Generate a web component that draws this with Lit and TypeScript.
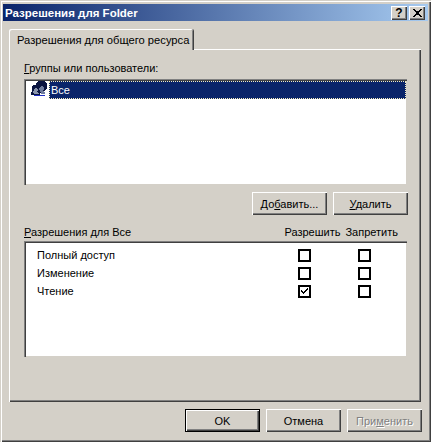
import { LitElement, html, css, svg } from "lit";
import { customElement } from "lit/decorators.js";

const checkMark = svg`<svg class="mark" width="9" height="9" viewBox="0 0 9 9" shape-rendering="crispEdges"><path d="M1 3h1v1h1v1h1V4h1V3h1V2h1V1h1v2H7v1H6v1H5v1H4v1H3V6H2V5H1z" fill="#000"/></svg>`;

const usersIcon = svg`<svg class="users" width="17" height="16" viewBox="0 0 17 16" shape-rendering="crispEdges">
  <path d="M8 0h5l3 2v5l-2 3h-2v2H4V6l1-3 1-2z" fill="#0a1440"/>
  <path d="M2 4h4l2 2v5l1 2v1H0v-3l1-1V6z" fill="#0a1440"/>
  <path d="M10 5h2v1h1v3h-1v1h1v1h1v2h-4v-2h-1V9H8V7h1V6h1z" fill="#6f7c9c"/>
  <path d="M4 7h2v1h1v2H6v1h1v1h1v1H3v-1H2v-2h1V8h1z" fill="#8a94ac"/>
  <path d="M2 14h12v1H3z" fill="#1f2fc4"/>
</svg>`;

@customElement("app-root")
export class AppRoot extends LitElement {
  static styles = css`
    :host { display: block; }
    * { box-sizing: border-box; }
    u { text-decoration: underline; text-underline-offset: 1px; }
    .window {
      width: 431px; height: 442px; background: #d4d0c8;
      padding: 4px 3px 3px 3px;
      display: flex; flex-direction: column;
      font: 11px "Liberation Sans", Arial, sans-serif; color: #000;
      box-shadow: inset 1px 1px 0 #d4d0c8, inset 2px 2px 0 #fff, inset -1px -1px 0 #404040, inset -2px -2px 0 #808080;
    }
    .title {
      height: 17px; flex: none; display: flex; align-items: center;
      padding: 0 3px 0 2px;
      background: linear-gradient(90deg, #0a246a, #a6caf0);
      color: #fff; font-weight: bold; font-size: 11.5px;
    }
    .title-text { flex: 1; }
    .cap {
      width: 16px; height: 14px; margin-left: 2px; background: #d4d0c8;
      box-shadow: inset 1px 1px 0 #fff, inset -1px -1px 0 #404040, inset -2px -2px 0 #808080;
      display: flex; align-items: center; justify-content: center;
      color: #000; font-size: 12px; font-weight: bold; line-height: 14px;
    }
    .cap svg { display: block; }
    .content { flex: 1; display: flex; flex-direction: column; padding: 8px 7px 0 6px; }
    .tabs { display: flex; height: 21px; margin-bottom: -1px; position: relative; z-index: 1; flex: none; }
    .tab {
      width: 184px; padding-left: 8px; display: flex; align-items: center; background: #d4d0c8;
      font-size: 11.2px;
      border-radius: 2px 2px 0 0;
      box-shadow: inset 1px 1px 0 #fff, inset -1px 0 0 #808080, 1px 0 0 #404040;
    }
    .panel {
      height: 353px; flex: none; padding: 13px 14px 0 15px;
      box-shadow: inset 1px 1px 0 #fff, inset -1px -1px 0 #404040, inset -2px -2px 0 #808080;
    }
    .label { height: 12px; line-height: 12px; white-space: nowrap; }
    .list {
      background: #fff;
      width: 383px;
      box-shadow: inset 1px 1px 0 #808080, inset 2px 2px 0 #404040, inset -1px -1px 0 #d4d0c8;
      padding: 2px 1px 1px 2px;
    }
    .groups { height: 106px; margin-top: 5px; }
    .group-row { display: flex; height: 18px; align-items: flex-start; padding-left: 5px; }
    .users { display: block; flex: none; margin-right: 1px; }
    .sel {
      flex: 1; height: 18px; padding-left: 1px; background: #0a246a; color: #fff;
      line-height: 16px; border: 1px dotted #f6edc0;
    }
    .actions { display: flex; justify-content: flex-end; gap: 6px; margin-top: 7px; margin-right: -1px; }
    .btn {
      width: 75px; height: 23px; display: flex; align-items: center; justify-content: center;
      background: #d4d0c8;
      box-shadow: inset 1px 1px 0 #fff, inset -1px -1px 0 #404040, inset -2px -2px 0 #808080;
    }
    .btn.default { border: 1px solid #000; }
    .btn.disabled { color: #808080; text-shadow: 1px 1px 0 #fff; }
    .perm-head { display: flex; align-items: center; height: 12px; margin-top: 11px; }
    .perm-head .name { flex: 1; }
    .perm-head .col { margin-right: 5px; white-space: nowrap; }
    .perm-head .col:last-child { margin-right: 9px; }
    .perms { height: 116px; margin-top: 3px; padding: 5px 36px 0 13px; }
    .row { display: grid; grid-template-columns: 1fr 13px 13px; column-gap: 47px; height: 18px; align-items: center; }
    .check {
      width: 13px; height: 13px; border: 2px solid #000; background: #fff;
      display: flex; align-items: center; justify-content: center;
    }
    .mark { display: block; flex: none; }
    .footer { display: flex; justify-content: flex-end; gap: 6px; margin-top: 7px; margin-right: -1px; }
  `;

  render() {
    const rows: [string, boolean][] = [["Полный доступ", false], ["Изменение", false], ["Чтение", true]];
    return html`
      <div class="window">
        <div class="title">
          <span class="title-text">Разрешения для Folder</span>
          <div class="cap">?</div>
          <div class="cap">
            <svg width="9" height="8" viewBox="0 0 9 8" shape-rendering="crispEdges"><path d="M0 0h2v1h1v1h3V1h1V0h2v1H8v1H7v1H6v2h1v1h1v1h1v1H7V7H6V6H3v1H2v1H0V7h1V6h1V5h1V3H2V2H1V1H0z" fill="#000"/></svg>
          </div>
        </div>
        <div class="content">
          <div class="tabs"><div class="tab">Разрешения для общего ресурса</div></div>
          <div class="panel">
            <div class="label"><u>Г</u>руппы или пользователи:</div>
            <div class="list groups">
              <div class="group-row">${usersIcon}<div class="sel">Все</div></div>
            </div>
            <div class="actions">
              <div class="btn"><span>До<u>б</u>авить...</span></div>
              <div class="btn"><span><u>У</u>далить</span></div>
            </div>
            <div class="perm-head">
              <div class="name"><u>Р</u>азрешения для Все</div>
              <div class="col">Разрешить</div>
              <div class="col">Запретить</div>
            </div>
            <div class="list perms">
              ${rows.map(([n, c]) => html`
                <div class="row">
                  <div>${n}</div>
                  <div class="check">${c ? checkMark : ""}</div>
                  <div class="check"></div>
                </div>`)}
            </div>
          </div>
          <div class="footer">
            <div class="btn default">OK</div>
            <div class="btn">Отмена</div>
            <div class="btn disabled"><span>При<u>м</u>енить</span></div>
          </div>
        </div>
      </div>
    `;
  }
}
